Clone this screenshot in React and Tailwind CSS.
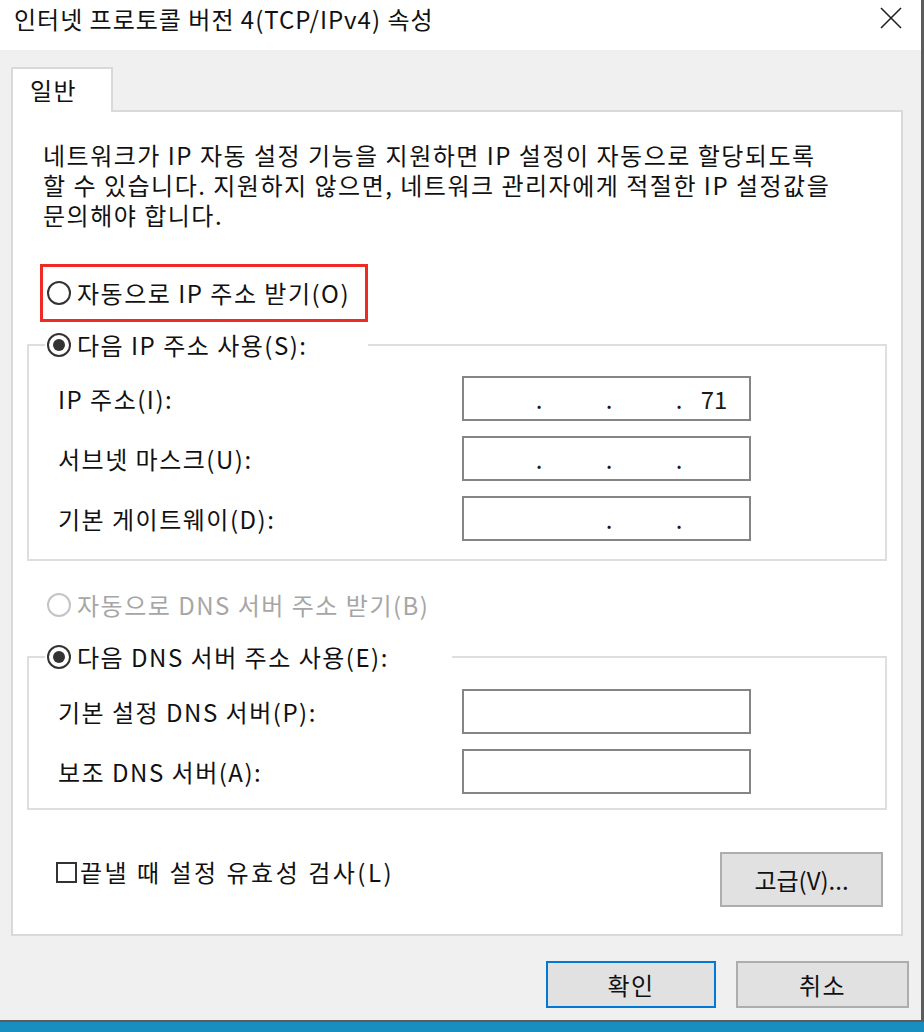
import React from 'react';

const Radio = ({ checked, disabled }) => (
  <span
    className={`flex items-center justify-center w-[24px] h-[24px] shrink-0 rounded-full border-2 bg-white ${
      disabled ? 'border-[#c4c4c4]' : 'border-[#333333]'
    }`}
  >
    {checked && <span className="block w-[12px] h-[12px] rounded-full bg-[#333333]" />}
  </span>
);

const IpField = ({ last, dots = [true, true, true] }) => (
  <div className="flex items-center w-[289px] h-[45px] border-2 border-[#858585] bg-white pl-[9px] tracking-normal text-[#1a1a1a]">
    <span className="w-[62px]" />
    <span className="w-[8px] text-center">{dots[0] ? '.' : ''}</span>
    <span className="w-[62px]" />
    <span className="w-[8px] text-center">{dots[1] ? '.' : ''}</span>
    <span className="w-[62px]" />
    <span className="w-[8px] text-center">{dots[2] ? '.' : ''}</span>
    <span className="w-[62px] text-center">{last}</span>
  </div>
);

const TextField = () => (
  <div className="w-[289px] h-[45px] border-2 border-[#858585] bg-white" />
);

const Row = ({ label, children }) => (
  <div className="flex items-center h-[45px]">
    <span className="w-[417px] pl-[13px] whitespace-nowrap">{label}</span>
    {children}
  </div>
);

export default function App() {
  return (
    <div className="w-[924px] h-[1032px] bg-[#178dc0] font-['Noto_Sans_CJK_KR','Liberation_Sans',sans-serif] text-[24px] leading-[30px] tracking-[1.5px] text-[#111111]">
      <div className="h-[1022px] flex flex-col bg-[#f0f0f0] border-r-[3px] border-b-2 border-[#5c5c5c]">
        {/* title bar */}
        <div className="h-[50px] bg-white flex justify-between items-start">
          <span className="pl-[14px] pt-[4px] whitespace-nowrap tracking-[1px]">인터넷 프로토콜 버전 4(TCP/IPv4) 속성</span>
          <svg width="22" height="22" viewBox="0 0 22 22" className="mt-[7px] mr-[19px]">
            <path d="M1 1 L21 21 M21 1 L1 21" stroke="#222" strokeWidth="1.6" />
          </svg>
        </div>

        {/* tab */}
        <div className="pt-[17px] pl-[11px]">
          <div className="relative z-10 w-[102px] h-[45px] -mb-[2px] border-2 border-b-0 border-[#d9d9d9] bg-white pl-[17px] pt-[6px]">
            일반
          </div>
          <div className="w-[892px] border-2 border-[#d9d9d9] bg-white pt-[28px] pb-[27px]">
            <p className="pl-[30px] whitespace-nowrap">
              네트워크가 IP 자동 설정 기능을 지원하면 IP 설정이 자동으로 할당되도록
              <br />할 수 있습니다. 지원하지 않으면, 네트워크 관리자에게 적절한 IP 설정값을
              <br />문의해야 합니다.
            </p>

            <div className="ml-[27px] mt-[34px] w-[328px] h-[58px] border-[3px] border-[#ee2a24] flex items-center pl-[4px] gap-[6px]">
              <Radio />
              <span className="whitespace-nowrap">자동으로 IP 주소 받기(O)</span>
            </div>

            <fieldset className="mx-[14px] mt-[8px] border-2 border-[#dedede] px-[16px] pb-[18px]">
              <legend className="w-[323px] pl-[2px] flex items-center gap-[6px] h-[30px]">
                <Radio checked />
                <span className="whitespace-nowrap">다음 IP 주소 사용(S):</span>
              </legend>
              <div className="pt-[16px] flex flex-col gap-[15px]">
                <Row label="IP 주소(I):">
                  <IpField last="71" />
                </Row>
                <Row label="서브넷 마스크(U):">
                  <IpField />
                </Row>
                <Row label="기본 게이트웨이(D):">
                  <IpField dots={[false, true, true]} />
                </Row>
              </div>
            </fieldset>

            <div className="ml-[34px] mt-[29px] flex items-center gap-[6px] h-[30px] text-[#a6a6a6]">
              <Radio disabled />
              <span className="whitespace-nowrap">자동으로 DNS 서버 주소 받기(B)</span>
            </div>

            <fieldset className="mx-[14px] mt-[22px] border-2 border-[#dedede] px-[16px] pb-[14px]">
              <legend className="w-[407px] pl-[2px] flex items-center gap-[6px] h-[30px]">
                <Radio checked />
                <span className="whitespace-nowrap">다음 DNS 서버 주소 사용(E):</span>
              </legend>
              <div className="pt-[17px] flex flex-col gap-[15px]">
                <Row label="기본 설정 DNS 서버(P):">
                  <TextField />
                </Row>
                <Row label="보조 DNS 서버(A):">
                  <TextField />
                </Row>
              </div>
            </fieldset>

            <div className="mt-[42px] pl-[43px] pr-[18px] flex justify-between items-start">
              <div className="mt-[5px] flex items-center gap-[3px]">
                <span className="w-[21px] h-[21px] border-2 border-[#333333] bg-white" />
                <span className="whitespace-nowrap tracking-[2.5px]">끝낼 때 설정 유효성 검사(L)</span>
              </div>
              <button className="w-[163px] h-[55px] border-2 border-[#adadad] bg-[#e1e1e1] tracking-normal">고급(V)...</button>
            </div>
          </div>
        </div>

        {/* dialog buttons */}
        <div className="mt-[25px] pr-[12px] flex justify-end gap-[20px]">
          <button className="w-[170px] h-[47px] border-2 border-[#0078d7] bg-[#e1e1e1]">확인</button>
          <button className="w-[173px] h-[47px] border-2 border-[#adadad] bg-[#e1e1e1]">취소</button>
        </div>
      </div>
    </div>
  );
}
